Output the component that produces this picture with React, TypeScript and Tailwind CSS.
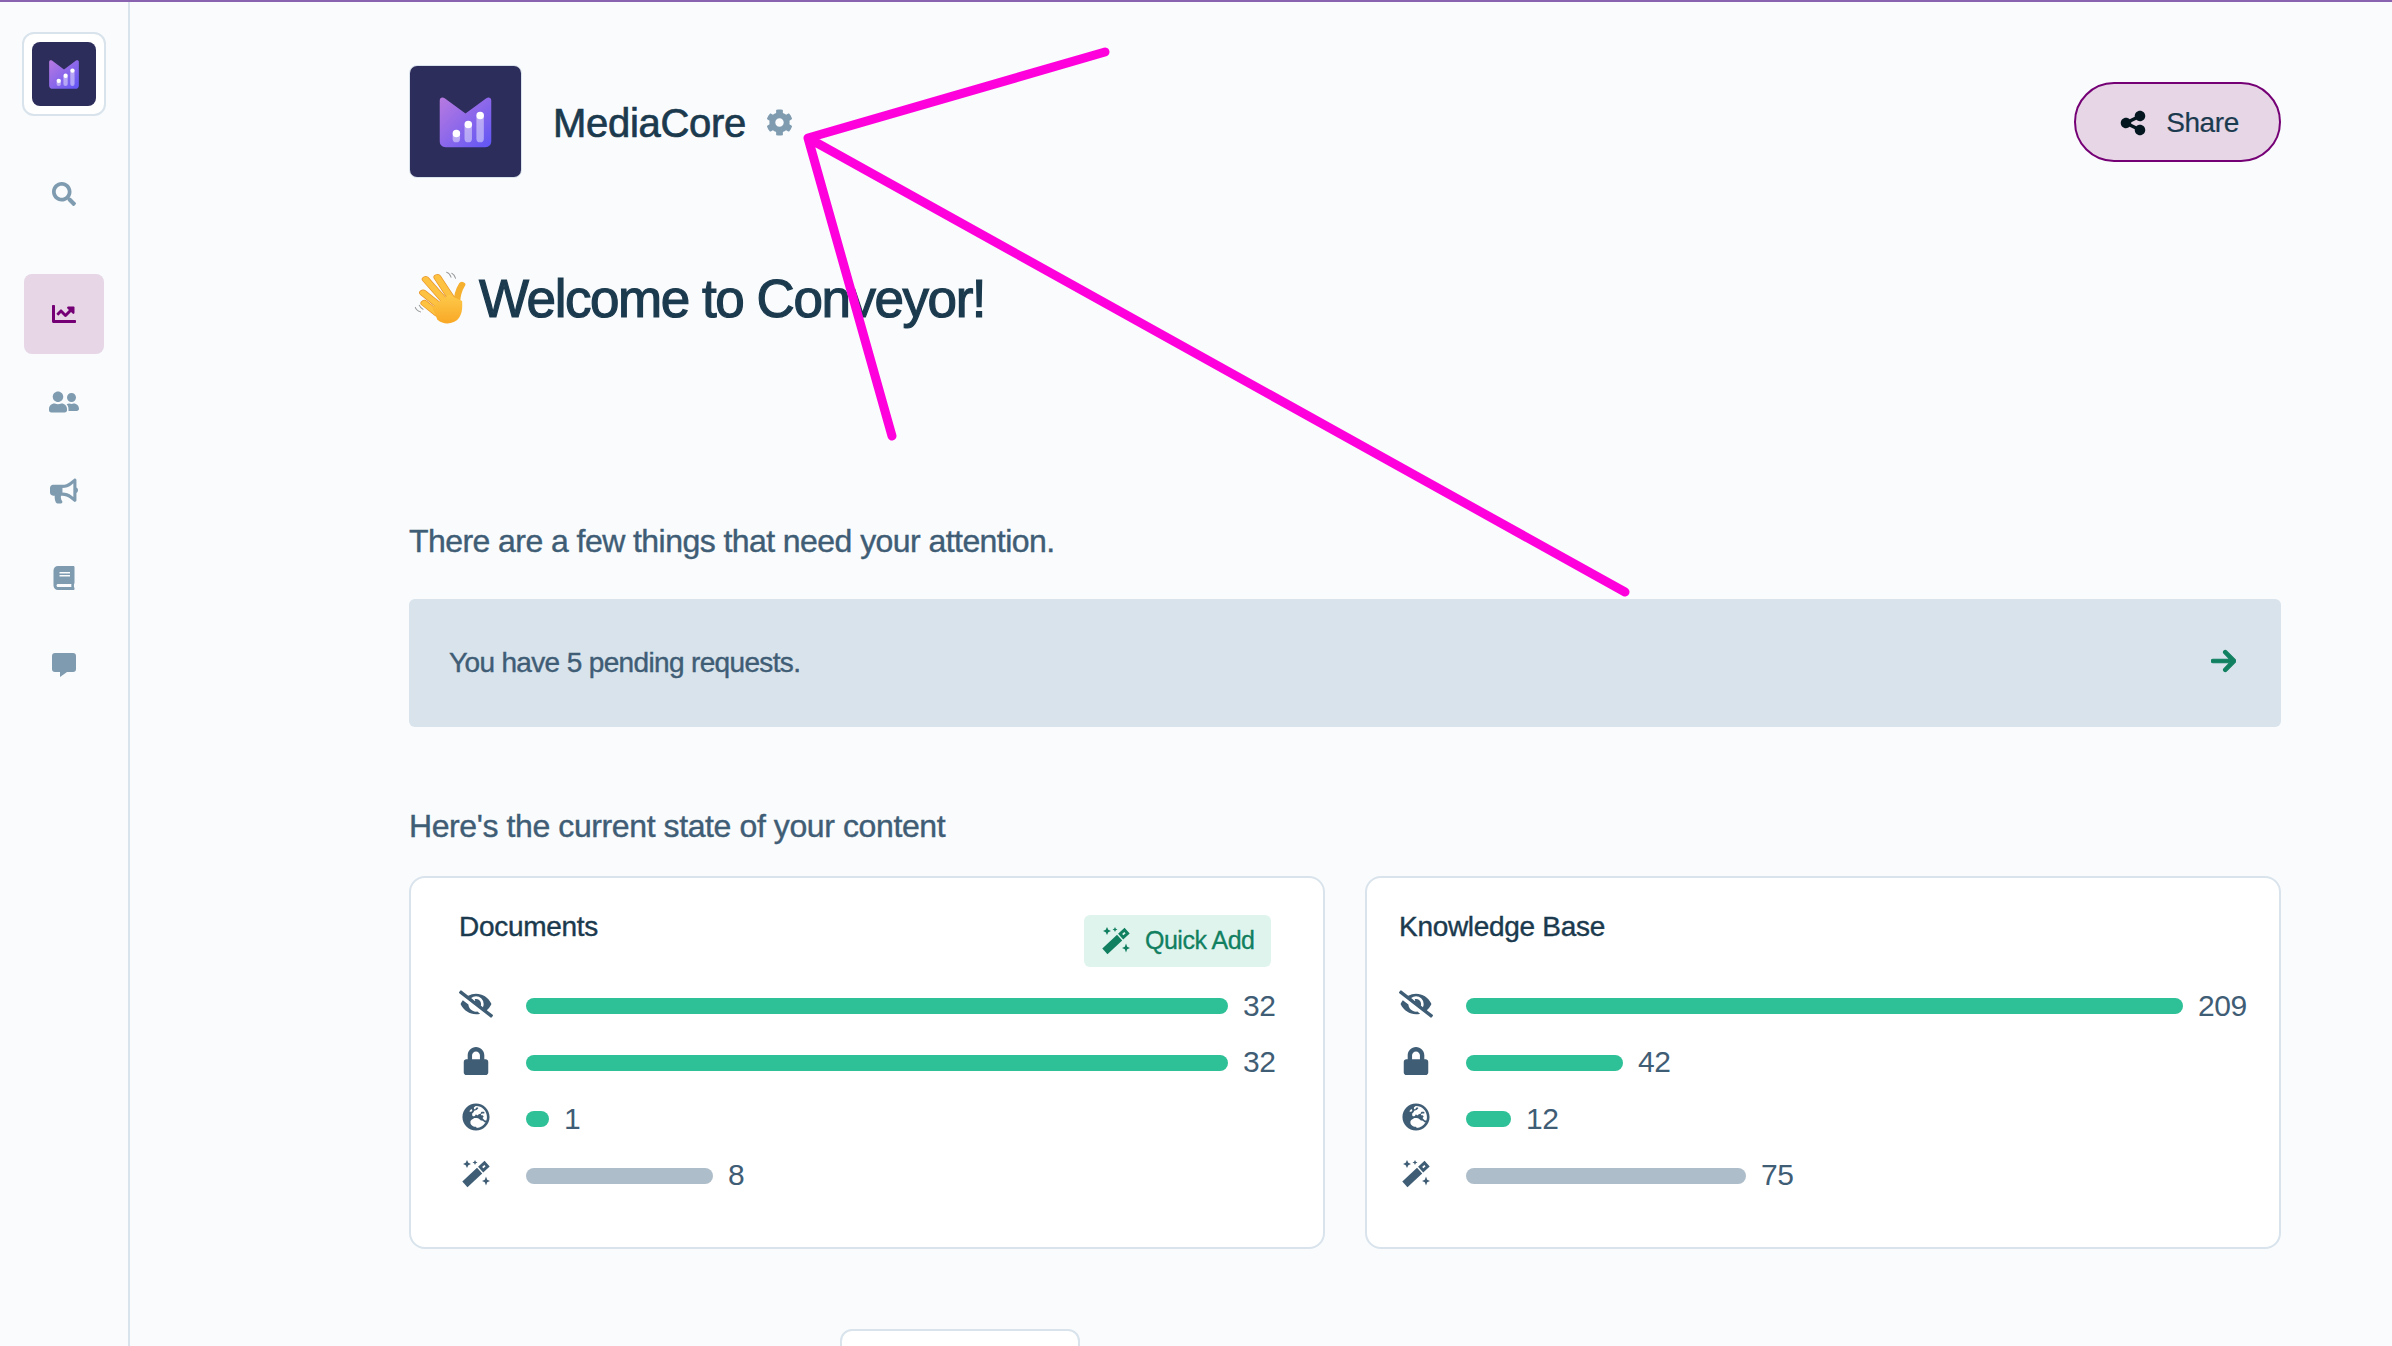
import { FaBook, FaBullhorn, FaChartLine, FaEyeSlash, FaCog, FaLock, FaSearch, FaUserFriends, FaGlobeEurope } from 'react-icons/fa';
import { FaArrowRight, FaShareNodes } from 'react-icons/fa6';

interface Row {
  icon: React.ComponentType<{ className?: string }>;
  barClass: string;
  color: string;
  count: number;
}

// font awesome's wand has the sparkles in other places, so this one is drawn by hand
function Wand({ className }: { className?: string }) {
  return (
    <svg viewBox="0 0 28 28" className={className} fill="currentColor">
      <path d="M5.450 27.200 L.300 21.600 L15.050 7.870 L20.200 13.400 Z" />
      <path fillRule="evenodd" d="M21.200 12.400 L16.050 6.870 L22.550 .870 L27.700 6.400 Z M23.600 6.300 L22.300 4.900 L20.100 6.900 L21.400 8.300 Z" />
      <path d="M5 0 L6.300 2.700 L9 4 L6.300 5.300 L5 8 L3.700 5.300 L1 4 L3.700 2.700 Z" />
      <path d="M13 0 L13.800 1.700 L15.500 2.500 L13.800 3.300 L13 5 L12.200 3.300 L10.500 2.500 L12.200 1.700 Z" />
      <path d="M24 16.500 L25.200 19.800 L28 21 L25.200 22.200 L24 25.500 L22.800 22.200 L20 21 L22.800 19.800 Z" />
    </svg>
  );
}

const docRows: Row[] = [
  { icon: FaEyeSlash, barClass: 'w-[702px]', color: 'bg-[#2ec097]', count: 32 },
  { icon: FaLock, barClass: 'w-[702px]', color: 'bg-[#2ec097]', count: 32 },
  { icon: FaGlobeEurope, barClass: 'w-[23px]', color: 'bg-[#2ec097]', count: 1 },
  { icon: Wand, barClass: 'w-[187px]', color: 'bg-[#adbdc9]', count: 8 },
];

const kbRows: Row[] = [
  { icon: FaEyeSlash, barClass: 'w-[717px]', color: 'bg-[#2ec097]', count: 209 },
  { icon: FaLock, barClass: 'w-[157px]', color: 'bg-[#2ec097]', count: 42 },
  { icon: FaGlobeEurope, barClass: 'w-[45px]', color: 'bg-[#2ec097]', count: 12 },
  { icon: Wand, barClass: 'w-[280px]', color: 'bg-[#adbdc9]', count: 75 },
];

function Logo({ className, id }: { className: string; id: string }) {
  return (
    <svg viewBox="0 0 112 112" className={className}>
      <defs>
        <linearGradient id={id} x1="0" y1="0" x2="1" y2="1">
          <stop offset="0" stopColor="#b87ae0" />
          <stop offset="1" stopColor="#5f55f5" />
        </linearGradient>
      </defs>
      <rect width="112" height="112" fill="#2d2d5b" />
      <path d="M30 35c0-3 2.500-4 5-2.500L56 48l21-15.500c2.500-1.500 5-.5 5 2.500v41c0 3.500-2.500 6-6 6H36c-3.500 0-6-2.500-6-6z" fill={`url(#${id})`} />
      <rect x="43" y="67" width="7.500" height="10" rx="3.700" fill="#fff" fillOpacity="0.45" />
      <rect x="55" y="58" width="7.500" height="19" rx="3.700" fill="#fff" fillOpacity="0.45" />
      <rect x="67" y="49" width="7.500" height="28" rx="3.700" fill="#fff" fillOpacity="0.45" />
      <circle cx="46.800" cy="68" r="3.800" fill="#fff" />
      <circle cx="58.800" cy="59" r="3.800" fill="#fff" />
      <circle cx="70.800" cy="50" r="3.800" fill="#fff" />
    </svg>
  );
}

function WaveHand() {
  const fingers = [
    'M18 7 L29 28',
    'M9 9 L23 29',
    'M7 22 L19 34',
    'M8 32 L18 42',
  ];
  return (
    <svg viewBox="0 0 40 56" preserveAspectRatio="none" className="h-[58px] w-[52px] shrink-0">
      <defs>
        <linearGradient id="hand" x1="0" y1="0" x2="0" y2="1">
          <stop offset="0" stopColor="#fdc94a" />
          <stop offset="1" stopColor="#f9a825" />
        </linearGradient>
      </defs>
      <path d="M25 2c2 1 3 3 3.500 5M29 3c1.500 1 2.500 3 3 5M1 36c.5 2 2 3.500 4 4.500M4 34c.5 1.500 1.500 3 3 4" fill="none" stroke="#9a9a9a" strokeWidth="0.800" strokeLinecap="round" />
      <path d="M37 14 Q33 22 33 32" fill="none" stroke="#f5b02e" strokeWidth="5" strokeLinecap="round" />
      {fingers.map((d, i) => (
        <g key={i}>
          <path d={d} fill="none" stroke="#e8952a" strokeWidth="6" strokeLinecap="round" />
          <path d={d} fill="none" stroke="#fdc241" strokeWidth="4.800" strokeLinecap="round" />
        </g>
      ))}
      <path d="M14 36 L27 24 L37 30 Q38 46 31 50 Q24 54 18 48 Z" fill="url(#hand)" />
    </svg>
  );
}

function StatCard({ title, rows, quickAdd, barGap }: { title: string; rows: Row[]; quickAdd?: boolean; barGap: string }) {
  return (
    <div className="relative h-[373px] rounded-2xl border-2 border-[#d9e3ec] bg-white">
      <div className={`flex h-[100px] items-start justify-between ${barGap}`}>
        <h3 className="pt-[31px] text-[28px] leading-[36px] tracking-[-0.3px] text-[#1b3a4e] [-webkit-text-stroke:0.4px_#1b3a4e]">{title}</h3>
        {quickAdd && (
          <button className="mr-[52px] mt-[37px] flex h-[52px] w-[187px] items-center gap-[15px] rounded-md bg-[#e0f4ee] pl-[18px] text-[25px] tracking-[-0.5px] text-[#118060] [-webkit-text-stroke:0.3px_#118060]">
            <Wand className="h-[28px] w-[28px]" />
            Quick Add
          </button>
        )}
      </div>
      <div className={`flex flex-col ${barGap}`}>
        {rows.map((row, i) => {
          const RowIcon = row.icon;
          return (
            <div key={i} className="flex h-[56.500px] items-center">
              <div className="flex w-[67px] shrink-0">
                <RowIcon className="h-[28px] w-[34px] -translate-y-[2px] text-[#3f5d75]" />
              </div>
              <div className={`h-[16px] rounded-full ${row.barClass} ${row.color}`} />
              <span className="ml-[15px] -translate-y-[1px] text-[30px] tracking-[-0.4px] text-[#3f5d75]">{row.count}</span>
            </div>
          );
        })}
      </div>
    </div>
  );
}

export default function App() {
  return (
    <div className="relative h-screen overflow-hidden border-t-2 border-[#8a63b0] bg-[#f9fbfd] font-['Liberation_Sans',sans-serif]">
      <div className="flex h-full">
        <aside className="flex w-[130px] shrink-0 flex-col items-center border-r-2 border-[#d9e3ec]">
          <div className="mt-[30px] flex h-[84px] w-[84px] items-center justify-center rounded-xl border-2 border-[#d9e3ec] bg-white">
            <div className="h-[64px] w-[64px] overflow-hidden rounded-lg">
              <Logo className="h-full w-full" id="sideLogo" />
            </div>
          </div>
          <FaSearch className="mt-[66px] h-[24px] w-[24px] text-[#7f9bb0]" />
          <div className="mt-[68px] flex h-[80px] w-[80px] items-center justify-center rounded-lg bg-[#e6d6e6]">
            <FaChartLine className="h-[24px] w-[24px] text-[#750075]" />
          </div>
          <FaUserFriends className="mt-[36px] h-[24px] w-[30px] text-[#7f9bb0]" />
          <FaBullhorn className="mt-[64px] h-[26px] w-[28px] text-[#7f9bb0]" />
          <FaBook className="mt-[62px] h-[24px] w-[22px] text-[#7f9bb0]" />
          <svg viewBox="0 0 24 24" className="mt-[63px] h-[24px] w-[24px] text-[#7f9bb0]">
            <path d="M3 0h18a3 3 0 0 1 3 3v13a3 3 0 0 1-3 3h-6l-7 5v-5H3a3 3 0 0 1-3-3V3a3 3 0 0 1 3-3z" fill="currentColor" />
          </svg>
        </aside>

        <main className="min-w-0 flex-1 pl-[279px] pr-[111px]">
          <header className="flex items-center justify-between pt-[63px]">
            <div className="flex items-center">
              <div className="h-[113px] w-[113px] overflow-hidden rounded-lg border border-[#d9e3ec]">
                <Logo className="h-full w-full" id="mainLogo" />
              </div>
              <h1 className="ml-[31px] pt-[2px] text-[40px] tracking-[-0.3px] text-[#1b3a4e] [-webkit-text-stroke:0.7px_#1b3a4e]">MediaCore</h1>
              <FaCog className="ml-[20px] mt-[2px] h-[27px] w-[27px] text-[#7f9bb0]" />
            </div>
            <button className="flex h-[80px] w-[207px] items-center justify-center gap-[20px] rounded-full border-2 border-[#750075] bg-[#e6d6e6] pl-[4px] pt-[2px] text-[28px] tracking-[-0.4px] text-[#1b3a4e] [-webkit-text-stroke:0.2px_#1b3a4e]">
              <FaShareNodes className="h-[28px] w-[26px] text-[#04161f]" />
              Share
            </button>
          </header>

          <div className="mt-[87px] flex items-center gap-[13px] pl-[5px]">
            <WaveHand />
            <h2 className="text-[53px] leading-[68px] tracking-[-1.450px] text-[#1b3a4e] [-webkit-text-stroke:1.2px_#1b3a4e]">Welcome to Conveyor!</h2>
          </div>

          <p className="mt-[188px] text-[32px] leading-[40px] tracking-[-0.56px] text-[#3f5d75] [-webkit-text-stroke:0.4px_#3f5d75]">There are a few things that need your attention.</p>
          <div className="mt-[38px] flex h-[128px] items-center justify-between rounded-md bg-[#d9e3ec] pl-[40px] pr-[45px]">
            <span className="text-[28px] tracking-[-0.65px] text-[#3f5d75] [-webkit-text-stroke:0.4px_#3f5d75]">You have 5 pending requests.</span>
            <FaArrowRight className="h-[28px] w-[25px] -translate-y-[2px] stroke-[20] text-[#118060]" />
          </div>

          <p className="mt-[79px] text-[32px] leading-[40px] tracking-[-0.4px] text-[#3f5d75] [-webkit-text-stroke:0.4px_#3f5d75]">Here's the current state of your content</p>

          <div className="mt-[30px] grid grid-cols-2 gap-[40px]">
            <StatCard title="Documents" rows={docRows} quickAdd barGap="pl-[48px]" />
            <StatCard title="Knowledge Base" rows={kbRows} barGap="pl-[32px]" />
          </div>

          <div className="ml-[431px] mt-[80px] h-[60px] w-[240px] rounded-t-xl border-2 border-[#d9e3ec] bg-white" />
        </main>
      </div>

      <svg className="pointer-events-none absolute inset-0 h-full w-full" fill="none" stroke="#ff00dc" strokeWidth="9" strokeLinecap="round" strokeLinejoin="round">
        <path d="M1105 50 L808 136 L892 434 M808 136 L1625 590" />
      </svg>
    </div>
  );
}
